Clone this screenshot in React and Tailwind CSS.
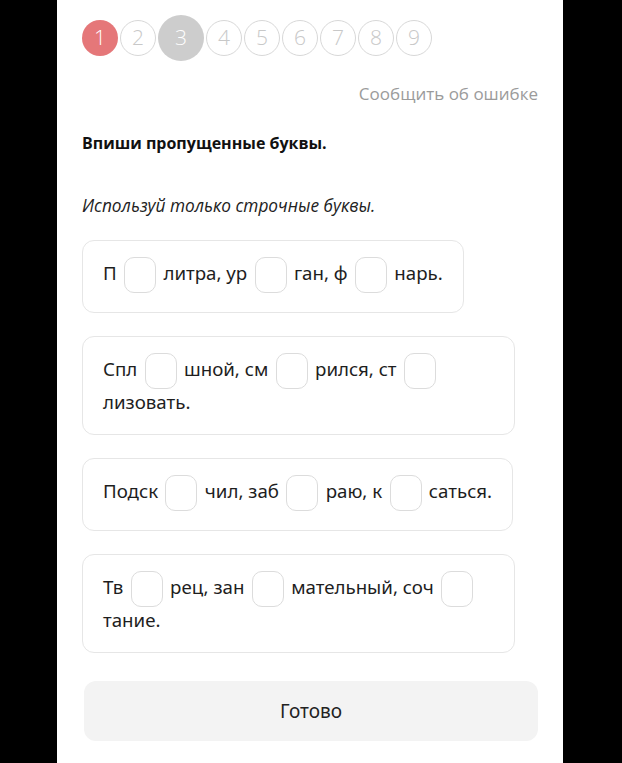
import React from "react";

const font = { fontFamily: '"Open Sans", "Noto Sans", sans-serif' };
const cardFont = { fontFamily: '"Noto Sans", "Open Sans", sans-serif' };

function Box() {
  return (
    <span className="inline-block align-middle w-[32px] h-[36px] mx-[2.5px] rounded-[10px] border border-[#dcdcdc] bg-white"></span>
  );
}

function Card({ parts }) {
  return (
    <div
      className="w-fit max-w-[433px] rounded-[12px] border border-[#e6e6e6] bg-white pl-5 pr-5 pt-4 pb-[19px] text-[18.7px] leading-[26px] text-[#1e1e1e]"
      style={cardFont}
    >
      {parts.map((p, i) => (
        <React.Fragment key={i}>
          {p}
          {i < parts.length - 1 ? (
            <>
              {" "}
              <Box />{" "}
            </>
          ) : null}
        </React.Fragment>
      ))}
    </div>
  );
}

export default function App() {
  const nums = [1, 2, 3, 4, 5, 6, 7, 8, 9];
  return (
    <div className="w-[622px] h-[763px] bg-black overflow-hidden" style={font}>
      <div className="ml-[57px] w-[506px] h-[763px] bg-white pl-[25px] pr-[25px] pt-[15px]">
        <div className="flex items-center gap-[2px] h-[46px]">
          {nums.map((n) => {
            if (n === 1)
              return (
                <div key={n} className="w-[36px] h-[36px] rounded-full bg-[#e57779] text-white flex items-center justify-center text-[21px] font-light">
                  {n}
                </div>
              );
            if (n === 3)
              return (
                <div key={n} className="w-[46px] h-[46px] rounded-full bg-[#cdcdcd] text-white flex items-center justify-center text-[21px] font-light">
                  {n}
                </div>
              );
            return (
              <div key={n} className="w-[36px] h-[36px] rounded-full border border-[#d8d8d8] text-[#c8c8c8] flex items-center justify-center text-[21px] font-light">
                {n}
              </div>
            );
          })}
        </div>
        <div className="mt-[21px] text-right text-[17px] leading-[24px] text-[#9b9b9b]">
          Сообщить об ошибке
        </div>
        <div className="mt-[25px] text-[16px] leading-[24px] font-bold text-[#111]">
          Впиши пропущенные буквы.
        </div>
        <div className="mt-[38px] text-[17.3px] leading-[26px] italic text-[#222]">
          Используй только строчные буквы.
        </div>
        <div className="mt-[21px] flex flex-col gap-[23px]">
          <Card parts={["П", "литра, ур", "ган, ф", "нарь."]} />
          <Card parts={["Спл", "шной, см", "рился, ст", "лизовать."]} />
          <Card parts={["Подск", "чил, заб", "раю, к", "саться."]} />
          <Card parts={["Тв", "рец, зан", "мательный, соч", "тание."]} />
        </div>
        <button className="mt-[28px] ml-[2px] w-[454px] h-[60px] rounded-[12px] bg-[#f3f3f3] text-[19px] text-[#222] flex items-center justify-center" style={cardFont}>
          Готово
        </button>
      </div>
    </div>
  );
}
